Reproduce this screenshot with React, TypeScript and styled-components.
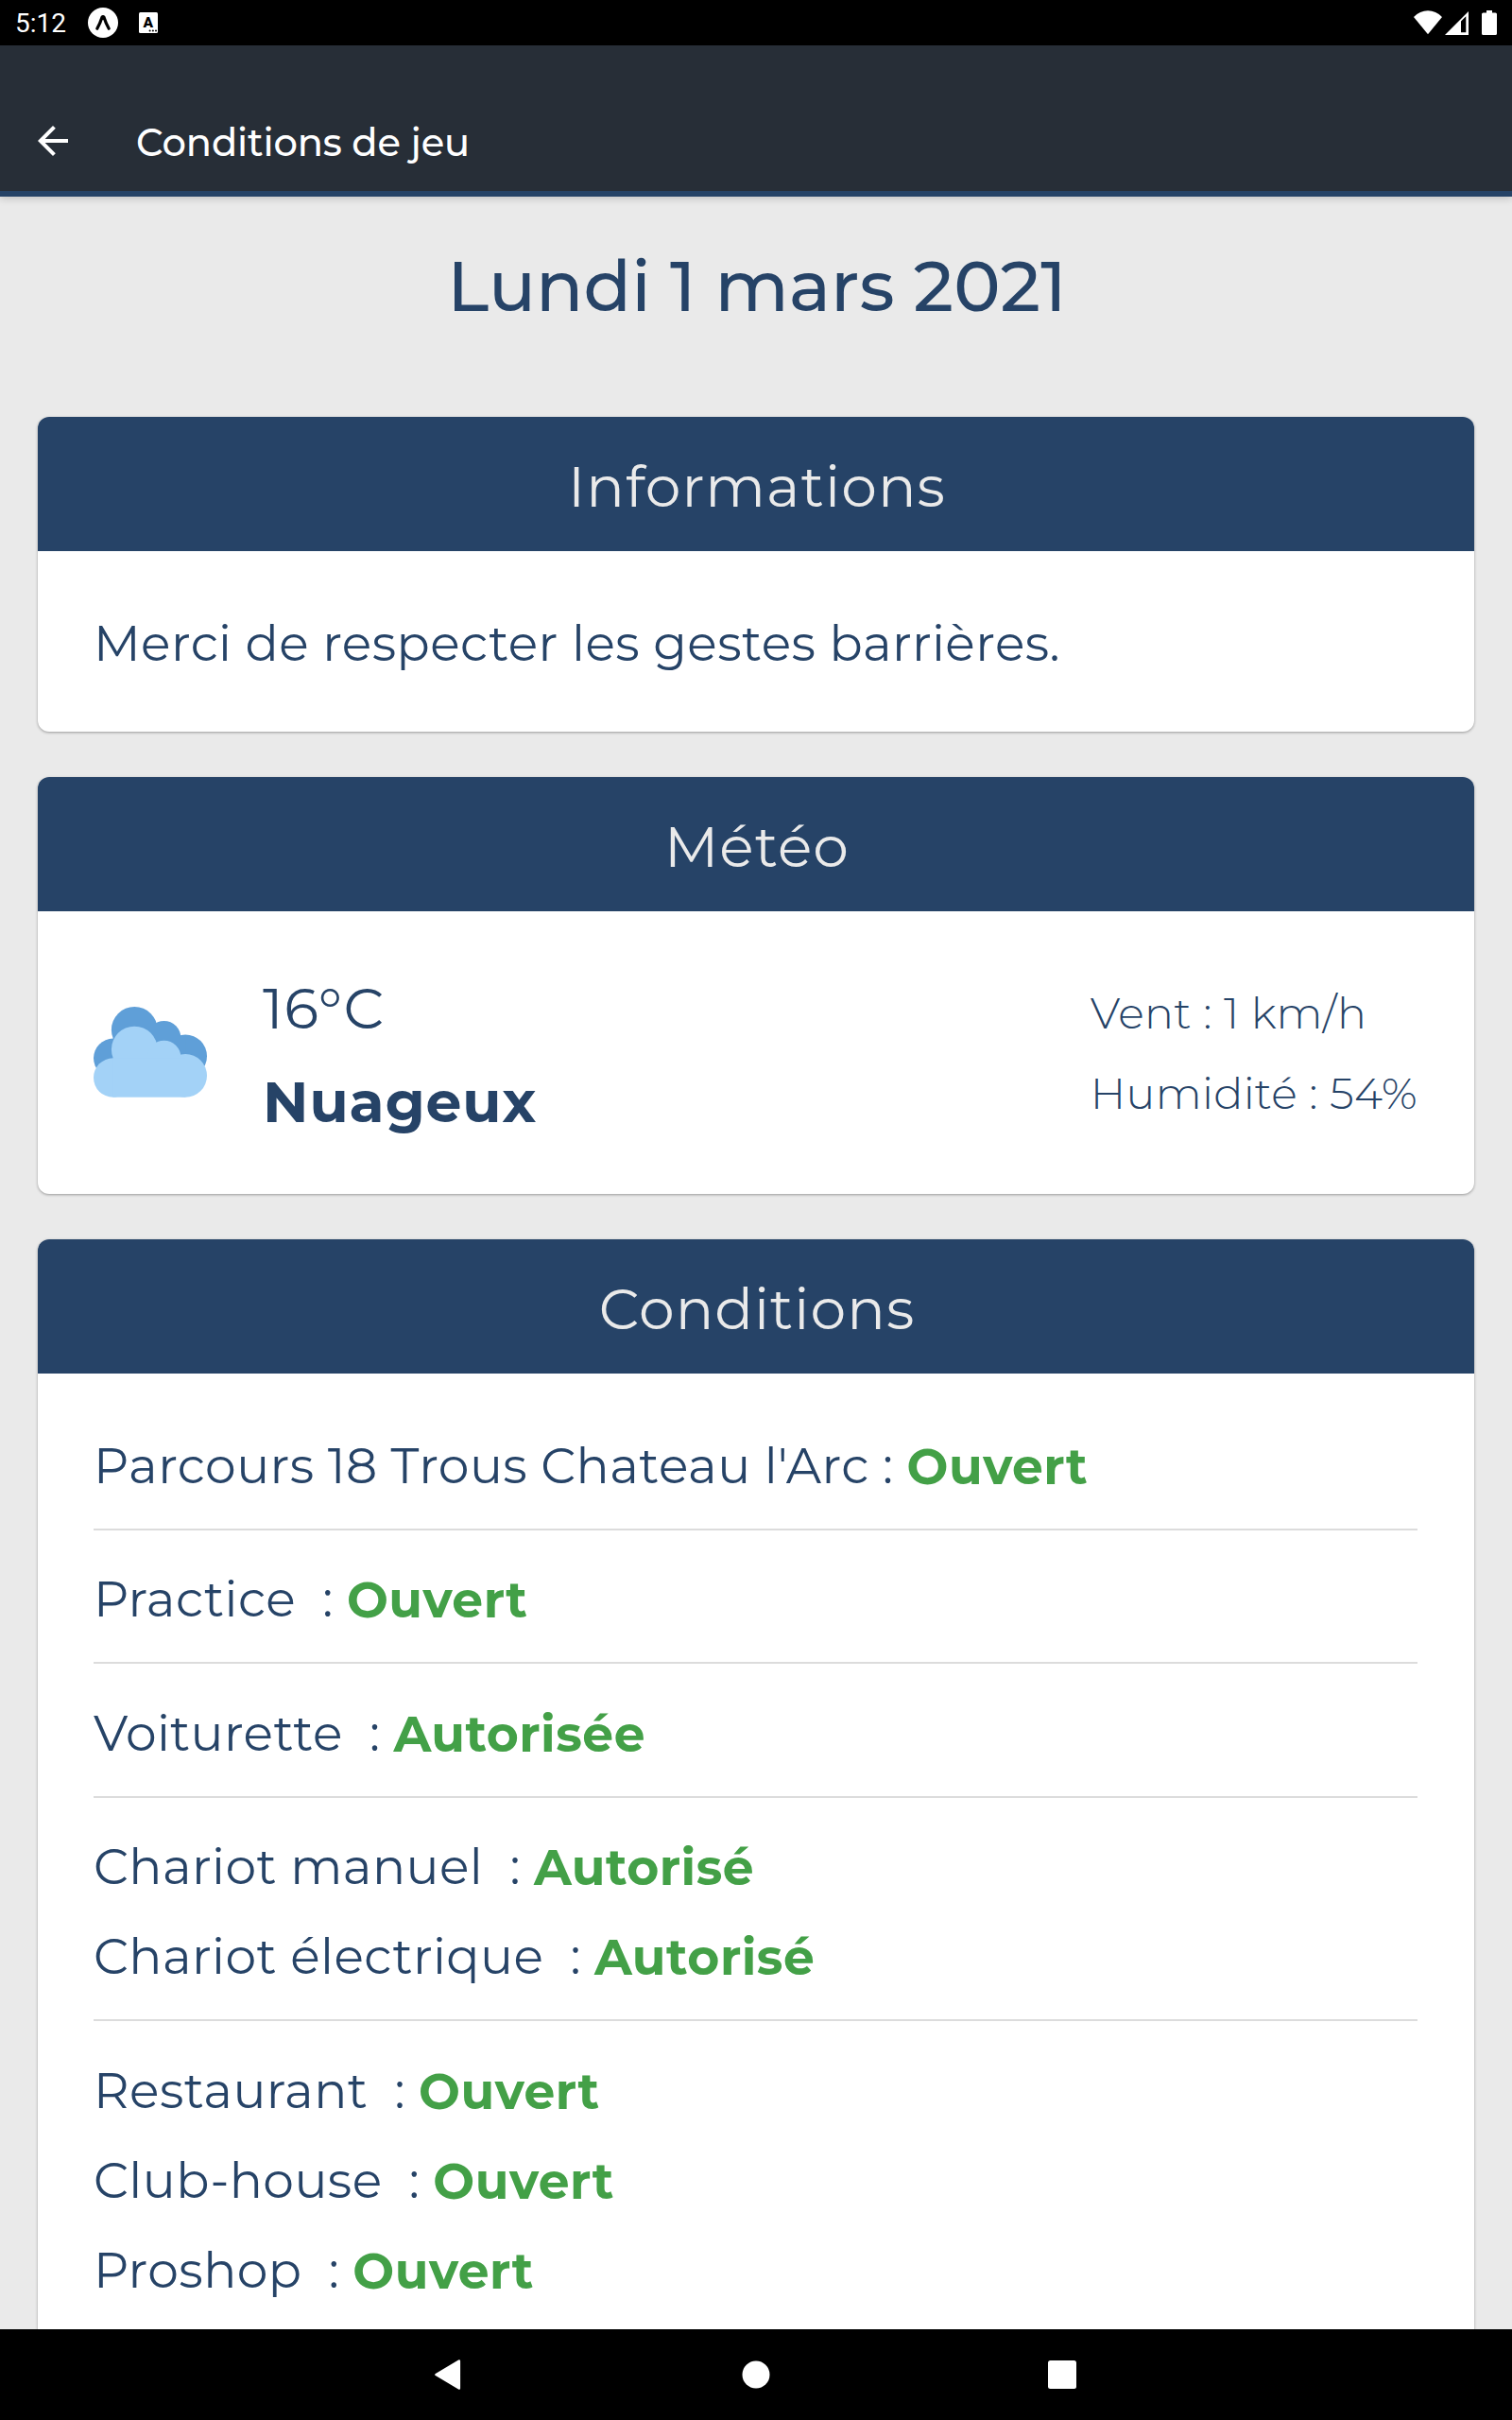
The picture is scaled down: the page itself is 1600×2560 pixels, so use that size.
import React from 'react';
import styled, { createGlobalStyle } from 'styled-components';

const colors = {
  navy: '#264367',
  bar: '#272e37',
  page: '#eaeaea',
  green: '#43a047',
  line: '#dcdcdc',
};

const GlobalStyle = createGlobalStyle`
  *, *::before, *::after { box-sizing: border-box; }
  html, body { margin: 0; padding: 0; }
  body {
    font-family: Montserrat, Inter, "Liberation Sans", sans-serif;
    color: ${colors.navy};
    background: ${colors.page};
  }
`;

const Screen = styled.div`
  display: flex;
  flex-direction: column;
  width: 1600px;
  height: 2560px;
  overflow: hidden;
  background: ${colors.page};
`;

const StatusBar = styled.div`
  display: flex;
  flex: none;
  align-items: center;
  justify-content: space-between;
  height: 48px;
  padding: 0 16px 0 16px;
  background: #000;
  color: #fff;
`;

const StatusGroup = styled.div`
  display: flex;
  align-items: center;
`;

const Clock = styled.span`
  width: 77px;
  padding-top: 2px;
  font: 400 28px/48px Roboto, "Liberation Sans", sans-serif;
`;

const Icon = styled.svg<{ $gap?: number }>`
  display: block;
  flex: none;
  margin-left: ${(p) => p.$gap ?? 0}px;
`;

const AppBar = styled.header`
  display: flex;
  flex: none;
  align-items: center;
  gap: 64px;
  height: 160px;
  padding: 48px 32px 0;
  background: ${colors.bar};
  border-bottom: 6px solid ${colors.navy};
  box-shadow: 0 2px 8px rgba(0, 0, 0, 0.18);
  z-index: 1;
`;

const AppBarTitle = styled.h1`
  margin: 0;
  padding-top: 2px;
  color: #fff;
  font-size: 40px;
  font-weight: 500;
  letter-spacing: -0.13px;
`;

const Content = styled.main`
  display: flex;
  flex: 1;
  flex-direction: column;
  min-height: 0;
  padding: 0 40px;
  overflow: hidden;
`;

const DateTitle = styled.h2`
  flex: none;
  margin: 0 0 44px;
  padding-left: 2px;
  font-size: 74px;
  font-weight: 500;
  line-height: 189px;
  letter-spacing: 0.1px;
  text-align: center;
`;

const Card = styled.section`
  flex: none;
  margin-bottom: 48px;
  border-radius: 12px;
  background: #fff;
  box-shadow: 0 1px 3px rgba(0, 0, 0, 0.35);
`;

const CardHeader = styled.h3`
  height: 142px;
  margin: 0;
  padding-left: 2px;
  border-radius: 12px 12px 0 0;
  background: ${colors.navy};
  color: ${colors.page};
  font-size: 60px;
  font-weight: 400;
  line-height: 147px;
  letter-spacing: 1.1px;
  text-align: center;
`;

const CardBody = styled.div`
  padding: 48px 60px 48px 59px;
`;

const Row = styled.p`
  height: 95px;
  margin: 0;
  font-size: 52px;
  font-weight: 400;
  line-height: 99px;
  letter-spacing: 0.46px;
  white-space: pre;
`;

const Status = styled.strong`
  color: ${colors.green};
  font-weight: 700;
  letter-spacing: 0.5px;
  line-height: 1;
  vertical-align: -1px;
`;

const Divider = styled.hr`
  height: 2px;
  margin: 21px 0 23.4px;
  border: 0;
  background: ${colors.line};
`;

const WeatherBody = styled.div`
  display: flex;
  align-items: center;
  height: 299px;
  padding: 0 60px 0 59px;
`;

const WeatherMain = styled.div`
  flex: 1;
  margin-left: 59px;
`;

const WeatherLine = styled.div<{ $bold?: boolean }>`
  height: 99px;
  font-size: 60px;
  font-weight: ${(p) => (p.$bold ? 700 : 400)};
  line-height: 104px;
  letter-spacing: 0.9px;
`;

const WeatherDetail = styled.div`
  height: 85px;
  font-size: 46px;
  font-weight: 300;
  line-height: 86px;
  letter-spacing: 0.35px;
  white-space: pre;
`;

const NavBar = styled.nav`
  display: flex;
  flex: none;
  align-items: center;
  justify-content: center;
  gap: 294px;
  height: 96px;
  padding-right: 1px;
  background: #000;
`;

const CloudShape = () => (
  <>
    <circle cx="20.7" cy="54.3" r="20.7" />
    <circle cx="97.2" cy="52.2" r="22.8" />
    <circle cx="43.3" cy="24.4" r="24.4" />
    <circle cx="74.6" cy="32.8" r="17.8" />
    <rect x="20.7" y="34" width="76.5" height="41" />
  </>
);

type Condition = { label: string; value: string };

const conditions: Condition[][] = [
  [{ label: "Parcours 18 Trous Chateau l'Arc : ", value: 'Ouvert' }],
  [{ label: 'Practice  : ', value: 'Ouvert' }],
  [{ label: 'Voiturette  : ', value: 'Autorisée' }],
  [
    { label: 'Chariot manuel  : ', value: 'Autorisé' },
    { label: 'Chariot électrique  : ', value: 'Autorisé' },
  ],
  [
    { label: 'Restaurant  : ', value: 'Ouvert' },
    { label: 'Club-house  : ', value: 'Ouvert' },
    { label: 'Proshop  : ', value: 'Ouvert' },
  ],
];

export default function App() {
  return (
    <>
      <GlobalStyle />
      <Screen>
        <StatusBar>
          <StatusGroup>
            <Clock>5:12</Clock>
            <Icon width="32" height="32" viewBox="0 0 32 32">
              <circle cx="16" cy="16" r="16" fill="#fff" />
              <path
                d="M9.8 22.2 Q13 16.500 15 10.200 Q16 8.800 17 10.200 Q19 16.500 22.200 22.200"
                fill="none"
                stroke="#000"
                strokeWidth="3.2"
                strokeLinecap="round"
                strokeLinejoin="round"
              />
            </Icon>
            <Icon $gap={22} width="20" height="22" viewBox="0 0 20 22">
              <rect width="20" height="22" rx="1.5" fill="#fff" />
              <text x="9.7" y="16.2" textAnchor="middle" fontFamily="Roboto, sans-serif" fontWeight="900" fontSize="15.5">
                A
              </text>
              <circle cx="11.6" cy="19.6" r="1" />
              <circle cx="14.9" cy="19.6" r="1" />
              <circle cx="18" cy="19.6" r="1" />
            </Icon>
          </StatusGroup>
          <StatusGroup>
            <Icon width="30" height="26" viewBox="0 0 30 26">
              <path d="M15 25.2 L0 7 Q6.500 0.300 15 0.300 Q23.500 0.300 30 7 Z" fill="#fff" />
            </Icon>
            <Icon $gap={3} width="25" height="26" viewBox="0 0 25 26">
              <path d="M0 26 L25 1 V26 Z M17 11.500 V23.300 H22.300 V6.200 Z" fill="#fff" fillRule="evenodd" />
            </Icon>
            <Icon $gap={14} width="16" height="26" viewBox="0 0 16 26">
              <path d="M5 0 H11 V2.500 H14.500 Q16 2.500 16 4 V24.500 Q16 26 14.500 26 H1.500 Q0 26 0 24.500 V4 Q0 2.500 1.500 2.500 H5 Z" fill="#fff" />
            </Icon>
          </StatusGroup>
        </StatusBar>

        <AppBar>
          <Icon width="48" height="48" viewBox="0 0 24 24">
            <path d="M20 11H7.830l5.590-5.590L12 4l-8 8 8 8 1.410-1.410L7.830 13H20v-2z" fill="#fff" />
          </Icon>
          <AppBarTitle>Conditions de jeu</AppBarTitle>
        </AppBar>

        <Content>
          <DateTitle>Lundi 1 mars 2021</DateTitle>

          <Card>
            <CardHeader>Informations</CardHeader>
            <CardBody>
              <Row>Merci de respecter les gestes barrières.</Row>
            </CardBody>
          </Card>

          <Card>
            <CardHeader>Météo</CardHeader>
            <WeatherBody>
              <Icon width="120" height="97" viewBox="0 0 120 97">
                <g fill="#5f9fd8">
                  <CloudShape />
                </g>
                <g fill="#a3d2f7" transform="translate(0 20.700)">
                  <CloudShape />
                </g>
              </Icon>
              <WeatherMain>
                <WeatherLine>16°C</WeatherLine>
                <WeatherLine $bold>Nuageux</WeatherLine>
              </WeatherMain>
              <div>
                <WeatherDetail>Vent : 1 km/h</WeatherDetail>
                <WeatherDetail>Humidité : 54%</WeatherDetail>
              </div>
            </WeatherBody>
          </Card>

          <Card>
            <CardHeader>Conditions</CardHeader>
            <CardBody>
              {conditions.map((group, i) => (
                <React.Fragment key={group[0].label}>
                  {i > 0 && <Divider />}
                  {group.map((c) => (
                    <Row key={c.label}>
                      {c.label}
                      <Status>{c.value}</Status>
                    </Row>
                  ))}
                </React.Fragment>
              ))}
            </CardBody>
          </Card>
        </Content>

        <NavBar>
          <Icon width="28" height="32" viewBox="0 0 28 32">
            <path d="M25.800 1.500 L1.500 16 L25.800 30.500 Z" fill="#fff" stroke="#fff" strokeWidth="2.600" strokeLinejoin="round" />
          </Icon>
          <Icon $gap={3} width="30" height="30" viewBox="0 0 30 30">
            <circle cx="15" cy="15" r="14.500" fill="#fff" />
          </Icon>
          <Icon width="30" height="30" viewBox="0 0 30 30">
            <rect width="30" height="30" rx="2.500" fill="#fff" />
          </Icon>
        </NavBar>
      </Screen>
    </>
  );
}
